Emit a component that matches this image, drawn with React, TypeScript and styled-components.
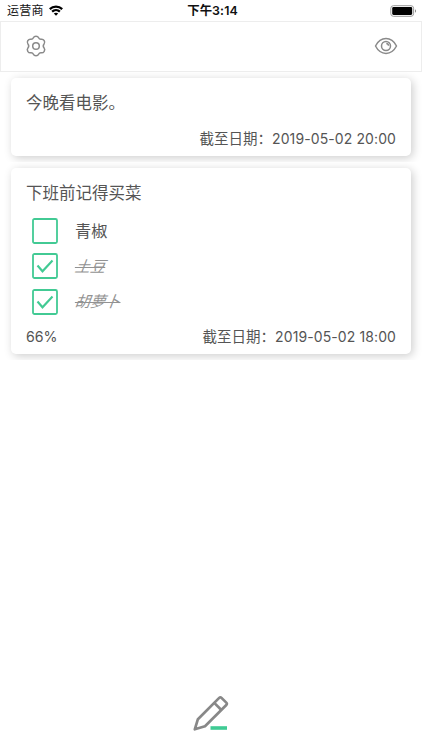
import React from "react";
import styled, { createGlobalStyle } from "styled-components";

const GlobalStyle = createGlobalStyle`
  * { box-sizing: border-box; }
  body {
    margin: 0;
    background: #fff;
    color: #555;
    font-family: Inter, "Noto Sans CJK SC", sans-serif;
  }
`;

const Screen = styled.div`
  width: 422px;
  height: 750px;
  display: flex;
  flex-direction: column;
  overflow: hidden;
  background: #fff;
`;

const StatusBar = styled.header`
  height: 21px;
  display: grid;
  grid-template-columns: 1fr auto 1fr;
  align-items: center;
  padding: 0 4px 0 7px;
  color: #111;
  font-size: 12px;
  line-height: 21px;
`;

const Carrier = styled.div`
  display: flex;
  align-items: center;
  gap: 5px;
  letter-spacing: 0.2px;
`;

const Clock = styled.div`
  font-weight: 600;
  font-size: 12.4px;
  letter-spacing: 0.1px;
`;

const Power = styled.div`
  display: flex;
  justify-content: flex-end;
`;

const Toolbar = styled.nav`
  height: 51px;
  flex: none;
  display: flex;
  align-items: center;
  justify-content: space-between;
  padding: 0 23px 2px;
  border: 1px solid #ededed;
`;

const List = styled.main`
  flex: 1;
`;

const CardSlot = styled.div<{ $height: number }>`
  height: ${(p) => p.$height}px;
  padding: 6px 11px 6px;
  overflow: hidden;
`;

const Card = styled.article`
  height: 100%;
  display: flex;
  flex-direction: column;
  padding: 13px 15px 7px;
  border-radius: 5px;
  background: #fff;
  box-shadow: 2px 2px 10px rgba(0, 0, 0, 0.2);
`;

const Title = styled.h2`
  margin: 0;
  font-size: 16.5px;
  font-weight: 400;
  line-height: 24px;
`;

const Tasks = styled.ul`
  list-style: none;
  margin: 8px 0 0;
  padding: 0 0 0 6px;
`;

const Task = styled.li`
  height: 35.5px;
  display: flex;
  align-items: center;
  gap: 17px;
`;

const TaskName = styled.span<{ $done: boolean }>`
  font-size: 16.2px;
  line-height: 24px;
  ${(p) =>
    p.$done &&
    `
    padding-top: 1px;
    font-size: 15.2px;
    font-style: italic;
    color: #929292;
    text-decoration: line-through;
    text-decoration-thickness: 1px;
    transform: skewX(-8deg);
  `}
`;

const Footer = styled.footer`
  margin-top: auto;
  display: flex;
  justify-content: space-between;
  line-height: 20px;
`;

const Progress = styled.span`
  font-size: 14.2px;
`;

const Deadline = styled.span`
  font-size: 14px;
  letter-spacing: 0.1px;
  display: flex;
`;

const DeadlineLabel = styled.span`
  font-size: 14.5px;
  letter-spacing: 0;
`;

const Compose = styled.footer`
  height: 56px;
  display: flex;
  justify-content: center;
`;

const Wifi = () => (
  <svg width="14" height="11" viewBox="0 0 14 11" fill="none" stroke="#000" strokeWidth="2.2">
    <path d="M.8 4.1C4.2.7 9.8.7 13.2 4.1" />
    <path d="M3.1 6.6c2.2-2.1 5.6-2.1 7.8 0" />
    <path d="M7 10.8 4.8 8.6c1.2-1.2 3.2-1.2 4.4 0Z" fill="#000" stroke="none" />
  </svg>
);

const Battery = () => (
  <svg width="28" height="12" viewBox="0 0 28 12">
    <rect x=".8" y=".7" width="22.8" height="10.6" rx="2.6" fill="none" stroke="#999" />
    <rect x="2.2" y="2.1" width="20" height="7.8" rx="1.3" fill="#000" />
    <path d="M25 4.3c1.4.5 1.4 2.9 0 3.4Z" fill="#888" />
  </svg>
);

const Gear = () => (
  <svg width="24" height="24" viewBox="0 0 24 24" fill="none" stroke="#8a8a8a" strokeWidth="1.5" strokeLinejoin="round">
    <path d="M9.4 3.7C10 2.3 10.8 2.2 12 2.2s2 .1 2.6 1.5c.5 1.2 1.4 1.7 2.8 1.5 1.5-.2 2.1.4 2.8 1.5.7 1.2 1 2-.1 3.2-.9 1.1-.9 3.1 0 4.2 1.1 1.2.8 2 .1 3.2-.7 1.1-1.3 1.7-2.8 1.5-1.4-.2-2.3.3-2.8 1.5-.6 1.4-1.4 1.5-2.6 1.5s-2-.1-2.6-1.5c-.5-1.2-1.4-1.7-2.8-1.5-1.5.2-2.1-.4-2.8-1.5-.7-1.2-1-2 .1-3.2.9-1.1.9-3.1 0-4.2-1.1-1.2-.8-2-.1-3.2.7-1.1 1.3-1.7 2.8-1.5 1.4.2 2.3-.3 2.8-1.5Z" />
    <circle cx="12" cy="12" r="3.3" />
  </svg>
);

const Eye = () => (
  <svg width="24" height="24" viewBox="0 0 24 24" fill="none" stroke="#8a8a8a" strokeWidth="1.5" strokeLinejoin="round">
    <path d="M1.5 12C4 7.2 7.6 4.6 12 4.6S20 7.2 22.5 12C20 16.8 16.4 19.4 12 19.4S4 16.8 1.5 12Z" />
    <circle cx="12" cy="12" r="4.5" />
    <path d="M12.3 9.5c1.3.1 2.2 1 2.3 2.3" />
  </svg>
);

const CheckBox = ({ checked }: { checked: boolean }) => (
  <svg width="26" height="26" viewBox="0 0 26 26" fill="none" stroke="#42ca94">
    <rect x="1" y="1" width="24" height="24" rx="1.5" strokeWidth="1.8" />
    {checked && <path d="m5.5 12.500 5 5.8L20.500 7.500" strokeWidth="2.1" />}
  </svg>
);

const Pencil = () => (
  <svg width="38" height="38" viewBox="0 0 38 38" fill="none">
    <g stroke="#888" strokeWidth="2.7" strokeLinejoin="round">
      <path d="M2.8 35.300 5.900 25.200 27.200 3.900c.8-.8 1.500-.8 2.300 0l4.800 4.700c.8.8.8 1.600 0 2.400L13 32.200 2.800 35.300Z" />
      <path d="m22.300 8.900 6.800 6.800" />
    </g>
    <path d="M18.500 34H35" stroke="#3fcb94" strokeWidth="3.6" />
  </svg>
);

type TaskItem = { name: string; done: boolean };
type Memo = { title: string; due: string; height: number; progress?: string; tasks?: TaskItem[] };

const memos: Memo[] = [
  { title: "今晚看电影。", due: "2019-05-02 20:00", height: 90 },
  {
    title: "下班前记得买菜",
    due: "2019-05-02 18:00",
    height: 198,
    progress: "66%",
    tasks: [
      { name: "青椒", done: false },
      { name: "土豆", done: true },
      { name: "胡萝卜", done: true },
    ],
  },
];

export default function App() {
  return (
    <Screen>
      <GlobalStyle />
      <StatusBar>
        <Carrier>运营商<Wifi /></Carrier>
        <Clock>下午3:14</Clock>
        <Power><Battery /></Power>
      </StatusBar>
      <Toolbar><Gear /><Eye /></Toolbar>
      <List>
        {memos.map((memo) => (
          <CardSlot key={memo.title} $height={memo.height}>
            <Card>
              <Title>{memo.title}</Title>
              {memo.tasks && (
                <Tasks>
                  {memo.tasks.map((task) => (
                    <Task key={task.name}>
                      <CheckBox checked={task.done} />
                      <TaskName $done={task.done}>{task.name}</TaskName>
                    </Task>
                  ))}
                </Tasks>
              )}
              <Footer>
                <Progress>{memo.progress}</Progress>
                <Deadline>
                  <DeadlineLabel>截至日期：</DeadlineLabel>
                  {memo.due}
                </Deadline>
              </Footer>
            </Card>
          </CardSlot>
        ))}
      </List>
      <Compose><Pencil /></Compose>
    </Screen>
  );
}
